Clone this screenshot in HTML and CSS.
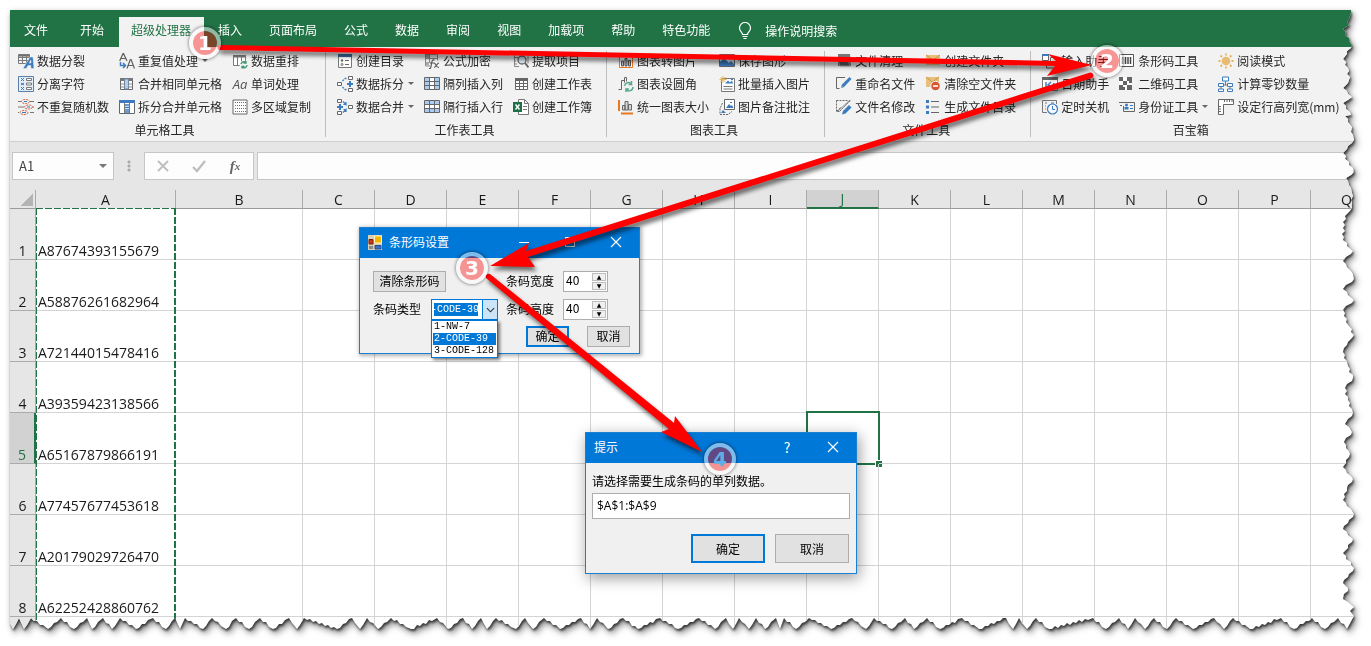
FILE: index.html
```html
<!DOCTYPE html>
<html lang="zh-CN">
<head>
<meta charset="utf-8">
<title>超级处理器 - 条形码工具</title>
<link rel="stylesheet" href="styles.css">
</head>
<body>
<svg class="defs" aria-hidden="true">
  <symbol id="split" viewBox="0 0 16 16"><path d="M.5 1.500h11v2H.5z" fill="#6b6b6b"/><path d="M.5 1.500h11v9H.5zM.5 4.500h11M.5 7.500h11M4.500 1.500v9M8.500 1.500v9" stroke="#7a7a7a" fill="none"/><path d="M5 15.500L12 4h3l1 11.500h-3l-.2-3H10l-1.700 3zM11 10h2l-.2-3z" fill="#3b7bbf" stroke="#f2f2f2" stroke-width=".5"/></symbol>
  <symbol id="chars" viewBox="0 0 16 16"><path d="M.5.5h15v15H.5z" fill="#e4eef8" stroke="#5a7ea6"/><path d="M3 2l3 3m0-3L3 5M3 7l3 2m0-2L3 9m0 2l3 3m0-3l-3 3" stroke="#3b7bbf"/><path d="M8.500 2.500h5v2h-5zM8.500 7h5v2h-5zM8.500 11.500h5v2h-5z" fill="#fff" stroke="#777"/></symbol>
  <symbol id="random" viewBox="0 0 16 16"><g fill="none"><path d="M0 2.500h3M12 2.500h4M0 8h6M15 8h1M0 13.500h1M12 13.500h4" stroke="#777"/><g stroke="#d0553a" stroke-dasharray="2 1"><ellipse cx="7.500" cy="2.500" rx="4" ry="2"/><ellipse cx="10.500" cy="8" rx="4" ry="2"/><ellipse cx="6" cy="13.500" rx="4" ry="2"/></g><path d="M6 2.500h3M9 8h3M4 13.500h4" stroke="#3b7bbf"/></g></symbol>
  <symbol id="repeat" viewBox="0 0 16 16"><path d="M.7 8L4 .7h.6L8 8M2 5.500h4.700M8 15.500l3.300-9h.8l3.400 9M9 12.500h5.500" fill="none" stroke="#606060" stroke-width="1.200"/><path d="M1.500 9v3.500H6M4 10l2.500 2.500L4 15" fill="none" stroke="#3b7bbf" stroke-width="1.500"/></symbol>
  <symbol id="merge" viewBox="0 0 16 16"><path d="M1.500 2.500h12v11h-12z" fill="#fff" stroke="#666"/><path d="M1 2h13v3H1z" fill="#777"/><path d="M5.500 3h4v10h-4z" fill="#b9cee6" stroke="#6f88a5"/><path d="M1.500 8h4M9.500 8h4M1.500 11h4M9.500 11h4" stroke="#888"/></symbol>
  <symbol id="unmerge" viewBox="0 0 16 16"><path d="M.5 1.500h15v13H.5z" fill="#fff" stroke="#666"/><path d="M0 1h16v3H0z" fill="#3b7bbf"/><path d="M5.500 4v10M10.500 4v10" stroke="#777"/><path d="M6 6h4M6 8.500h4M6 11h4M6 13h4" stroke="#3b7bbf" stroke-width="1.500"/></symbol>
  <symbol id="reorder" viewBox="0 0 16 16"><path d="M1.500 2.500h12v10h-12zM5.500 2v10M9.500 2v10" fill="#fff" stroke="#777"/><path d="M1 2h13v2.500H1z" fill="#777"/><circle cx="12" cy="12" r="4.500" fill="#f2f2f2"/><path d="M9 11a3 3 0 0 1 5-1.500V8m0 2h-2.500M15 12a3 3 0 0 1-5 2v1.500m0-2h2.500" fill="none" stroke="#3d9970" stroke-width="1.300"/></symbol>
  <symbol id="area" viewBox="0 0 16 16"><path d="M1 1h14v14H1z" fill="#fff" stroke="#666"/><path d="M3 3.500h11M3 6.500h11M3 9.500h11M3 12.500h11" stroke="#3b7bbf" stroke-dasharray="1 1"/></symbol>
  <symbol id="toc" viewBox="0 0 16 16"><path d="M1.500 1.500h13v13h-13z" fill="#fff" stroke="#777"/><path d="M1 1h14v3H1z" fill="#3b6ea0"/><path d="M8 7.500h4M8 11.500h4" stroke="#666"/><circle cx="5" cy="7.500" r="1.200" fill="#666"/><circle cx="5" cy="11.500" r="1" fill="none" stroke="#666"/></symbol>
  <symbol id="distribute" viewBox="0 0 16 16"><path d="M.5 6.500h4v3h-4zM11.500.5h4v3h-4zM11.500 12.500h4v3h-4z" fill="#fff" stroke="#666"/><path d="M10 8h6M13 5v6" stroke="#3b7bbf" stroke-width="2"/><path d="M5.500 5L8 2.500h2M5.500 11L8 13.500h2" fill="none" stroke="#3b7bbf" stroke-width="1.300" stroke-dasharray="2 1"/></symbol>
  <symbol id="combine" viewBox="0 0 16 16"><path d="M.5.5h4v3h-4zM.5 12.500h4v3h-4zM11.500 6.500h4v3h-4z" fill="#fff" stroke="#666"/><path d="M0 8h6M3 5v6" stroke="#3b7bbf" stroke-width="2"/><path d="M6 2.500l3 3V3m0 2.500H6.500M6 13.500l3-3V13m0-2.500H6.500" fill="none" stroke="#3b7bbf" stroke-width="1.200"/></symbol>
  <symbol id="formula" viewBox="0 0 16 16"><path d="M1.500 1.500h12v6M1.500 1v12H6M5.500 2v8M1.500 5.500h12" fill="none" stroke="#888"/><path d="M2 2h3v3H2zM2 9h3v3H2z" fill="#aaa"/><path d="M5 15.500c2 .5 2-2 2.500-5s1-4 3-3.500M6 10h4M10 10c2 0 2 5 5 4.500M15 10c-2 0-3 4.500-5 4.500" fill="none" stroke="#555" stroke-width="1.100"/></symbol>
  <symbol id="inscol" viewBox="0 0 16 16"><path d="M.5 1.500h15v12H.5z" fill="#fff"/><path d="M1 2h4v11H1zM11 2h4v11h-4z" fill="#a9cdf0"/><path d="M.5 1.500h15v12H.5zM5.500 2v11M10.500 2v11M.5 5.500h15M.5 9.500h15" fill="none" stroke="#666"/></symbol>
  <symbol id="insrow" viewBox="0 0 16 16"><path d="M.5 1.500h15v12H.5z" fill="#fff"/><path d="M1 2h14v3H1zM1 10h14v3H1z" fill="#a9cdf0"/><path d="M.5 1.500h15v12H.5zM5.500 2v11M10.500 2v11M.5 5.500h15M.5 9.500h15" fill="none" stroke="#666"/></symbol>
  <symbol id="extract" viewBox="0 0 16 16"><path d="M4 1.500H1.500v12H6M1 4.500h4M1 8h2M1 11h3M9 1.500h6v9" fill="none" stroke="#888"/><circle cx="9" cy="7" r="4" fill="#dbe8f5" stroke="#666" stroke-width="1.300"/><path d="M12 10l3.500 4.500" stroke="#666" stroke-width="2"/></symbol>
  <symbol id="table" viewBox="0 0 16 16"><path d="M2.500 2.500h12v11h-12zM2.500 7.500h12M2.500 10.500h12M6.500 5v8M10.500 5v8" fill="#fff" stroke="#666"/><path d="M2 2h13v3H2z" fill="#666"/></symbol>
  <symbol id="book" viewBox="0 0 16 16"><path d="M5.500.5h6l4 4v11h-10z" fill="#fff" stroke="#777"/><path d="M11.500.5v4h4M10 7.500h4M10 10.500h4" fill="none" stroke="#777"/><path d="M0 3h9v10H0z" fill="#1e7145"/><path d="M2.500 5.500l4 5m0-5l-4 5" stroke="#fff" stroke-width="1.400"/></symbol>
  <symbol id="chartpic" viewBox="0 0 16 16"><path d="M1.500 2.500h13v12h-13z" fill="#fff" stroke="#e87722"/><path d="M1 1h14v2H1z" fill="#e87722"/><path d="M3.500 8h2v5h-2zM7 5.500h2V13H7zM10.500 7.500h2V13h-2z" fill="#bbb" stroke="#555"/></symbol>
  <symbol id="round" viewBox="0 0 16 16"><path d="M.5 13.500h3v-9h3v6M6.500 6V1.500h2V6" fill="none" stroke="#666"/><circle cx="10.500" cy="10.500" r="5.500" fill="#f2f2f2"/><path d="M6.500 10a4 4 0 0 1 7-2V5m0 3.500h-3M15 11a4 4 0 0 1-7 2.500V16m0-3h3" fill="none" stroke="#5ca88a" stroke-width="1.500"/></symbol>
  <symbol id="size" viewBox="0 0 16 16"><path d="M1 1v11M3 14.500h12" stroke="#e87722" stroke-width="2"/><path d="M4.500 6.500h2.500v4.500H4.500zM7 2.500h3V11H7zM10.500 5.500h3V11h-3z" fill="#d6d6d6" stroke="#666"/></symbol>
  <symbol id="picture" viewBox="0 0 16 16"><path d="M.5 1.500h15v12H.5z" fill="#dbe8f5" stroke="#666"/><path d="M1 13V9l4-4 5 5 2-2 3 3v2z" fill="#3b7bbf"/></symbol>
  <symbol id="batch" viewBox="0 0 16 16"><path d="M2.500 2.500h13v13h-13z" fill="#fff" stroke="#777"/><path d="M6 7.500l3-3 2 2 2-2 1 3zM12 3h2v1h-2z" fill="#3b7bbf"/><path d="M4.500 10.500h9M4.500 13h9" stroke="#777"/><path d="M4 0v7M.5 3.500h7M1.500 1l5 5m0-5l-5 5" stroke="#e8b45c"/></symbol>
  <symbol id="note" viewBox="0 0 16 16"><path d="M5.500.5h10v10h-10z" fill="#fff" stroke="#666"/><path d="M7 9l3-4 2 2 1-1 1.500 3zM11 3h2v1h-2zM2 14l2-3 3 3z" fill="#3b7bbf"/><path d="M3.500 4L1 9.500v6h8l4-3" fill="none" stroke="#666" stroke-dasharray="2 1"/></symbol>
  <symbol id="clean" viewBox="0 0 16 16"><path d="M2 1h12l1 12H2z" fill="#777"/><path d="M1 5h10l3 8H4z" fill="#5e5e5e" stroke="#aaa"/></symbol>
  <symbol id="rename" viewBox="0 0 16 16"><path d="M9 1.500H.5v11h3" fill="none" stroke="#666"/><path d="M5 12l1-3.500L13.500 1l2 2L8 11z" fill="#3b7bbf"/><path d="M5 12l2.500-.5-2-2z" fill="#9ab"/></symbol>
  <symbol id="modify" viewBox="0 0 16 16"><path d="M.5 1.500h12M.5 1.500v11h4M4 12L15 1M1 12l4-4" fill="none" stroke="#666" stroke-dasharray="2 1"/><path d="M1 13L14 1" stroke="#888"/><path d="M6 15.500l1-3.500 6-6 2.500 2.500-6 6z" fill="#3b7bbf"/></symbol>
  <symbol id="folder" viewBox="0 0 16 16"><path d="M1 2h14v10H1z" fill="#e8c07c"/><path d="M1 2l7 5 7-5" fill="none" stroke="#c89648"/></symbol>
  <symbol id="delfolder" viewBox="0 0 16 16"><path d="M1 1h13v10H1z" fill="#e8c07c"/><path d="M1 1l6.500 5L14 1" fill="none" stroke="#c89648"/><circle cx="10.500" cy="10" r="4.700" fill="#d65532" stroke="#f2f2f2"/><path d="M8 10h5" stroke="#fff" stroke-width="1.600"/></symbol>
  <symbol id="list" viewBox="0 0 16 16"><path d="M6 2.500h8M6 8h8M6 13.500h8" stroke="#666"/><path d="M1 1h3v3H1zM1 6.500h3v3H1zM1 12h3v3H1z" fill="#3b7bbf"/></symbol>
  <symbol id="input" viewBox="0 0 16 16"><path d="M.5 1.500h6v6h-6zM8.500 4.500h7v7h-7z" fill="#fff" stroke="#666"/><path d="M0 1h7v2H0z" fill="#3b7bbf"/><path d="M4.500 8v7h8" fill="none" stroke="#666"/></symbol>
  <symbol id="date" viewBox="0 0 16 16"><path d="M.5 1.500h15v13H.5z" fill="#fff" stroke="#777"/><path d="M0 1h16v3H0z" fill="#666"/><path d="M4 6v6M9 6l-3 3 4 3 2-5" fill="none" stroke="#3b7bbf" stroke-width="1.500"/></symbol>
  <symbol id="timer" viewBox="0 0 16 16"><path d="M5 13.500H.5v-12h14V5M3 4h2M3 7h1M3 10h1" fill="none" stroke="#777"/><circle cx="10.500" cy="10" r="5" fill="#f5f9fd" stroke="#3b7bbf" stroke-width="1.200"/><path d="M10.500 7v3.500H13M9 4h3" stroke="#3b7bbf" fill="none"/></symbol>
  <symbol id="barcode" viewBox="0 0 16 16"><path d="M.5 1.500h14v12H.5z" fill="#fff" stroke="#555"/><path d="M3.500 4v7M6.500 4v7M11.500 4v7" stroke="#444" stroke-width="1.500"/><path d="M8.500 4v7M9.500 4v7" stroke="#777"/></symbol>
  <symbol id="qr" viewBox="0 0 16 16"><path d="M0 1h13v13H0z" fill="#fff"/><path d="M0 1h4v4H0zM8 1h5v4H8zM4 5h4v4H4zM0 9h4v5H0zM8 9h5v5H8zM10 5h3v2h-3zM4 11h2v3H4z" fill="#666"/></symbol>
  <symbol id="idcard" viewBox="0 0 16 16"><path d="M0 3.500h3M1 6.500h2M3 3.500h12.500v9h-11V7" fill="none" stroke="#666"/><circle cx="7.500" cy="6" r="1.500" fill="#3b7bbf"/><path d="M5.500 10.500V8h4v2.500z" fill="#3b7bbf"/><path d="M11 6.500h3M11 9.500h3" stroke="#3b7bbf"/></symbol>
  <symbol id="sun" viewBox="0 0 16 16"><circle cx="8" cy="8" r="4.300" fill="#e8bb72"/><path d="M8 .5v2M8 13.500v2M.5 8h2M13.500 8h2M2.500 2.500L4 4M12 12l1.500 1.500M2.500 13.500L4 12M12 4l1.500-1.500" stroke="#e8b45c" stroke-width="1.800"/></symbol>
  <symbol id="tree" viewBox="0 0 16 16"><path d="M4.500 1h6v4h-6zM.5 7.500h5v3h-5zM9.500 7.500h5v3h-5zM.5 13h5v2.500h-5zM9.500 13h5v2.500h-5z" fill="#fff" stroke="#3b7bbf"/><path d="M7.500 5v4M5.500 9h4M3 10.500V13M12 10.500V13" stroke="#777"/></symbol>
  <symbol id="ruler" viewBox="0 0 16 16"><path d="M.5.5h15v5h-10v10h-5z" fill="#fff" stroke="#666"/><path d="M6.500 1v2M9 1v2M11.500 1v2M14 1v2M1 7.500h2M1 10h2M1 12.500h2" stroke="#666"/></symbol>
</svg>

<main class="stage">
  <div class="shadow">
    <div class="app" id="app">
      <nav class="tabs">
        <button class="tab file">文件</button><button class="tab">开始</button><button class="tab active">超级处理器</button><button class="tab">插入</button><button class="tab">页面布局</button><button class="tab">公式</button><button class="tab">数据</button><button class="tab">审阅</button><button class="tab">视图</button><button class="tab">加载项</button><button class="tab">帮助</button><button class="tab">特色功能</button>
        <button class="tab tell"><svg class="bulb" viewBox="0 0 14 18"><path d="M4.500 12.500c0-2.500-3-3-3-6.500a5.500 5.500 0 0 1 11 0c0 3.500-3 4-3 6.500zM4.500 14.500h5M5.500 16.500h3" fill="none" stroke="#fff" stroke-width="1.200"/></svg>操作说明搜索</button>
      </nav>

      <div class="ribbon">
        <section class="group">
          <div class="cols">
            <div class="col"><button class="cmd"><svg><use href="#split"/></svg>数据分裂</button><button class="cmd"><svg><use href="#chars"/></svg>分离字符</button><button class="cmd"><svg><use href="#random"/></svg>不重复随机数</button></div>
            <div class="col"><button class="cmd more"><svg><use href="#repeat"/></svg>重复值处理</button><button class="cmd"><svg><use href="#merge"/></svg>合并相同单元格</button><button class="cmd"><svg><use href="#unmerge"/></svg>拆分合并单元格</button></div>
            <div class="col"><button class="cmd"><svg><use href="#reorder"/></svg>数据重排</button><button class="cmd"><i class="word">Aa</i>单词处理</button><button class="cmd"><svg><use href="#area"/></svg>多区域复制</button></div>
          </div>
          <h2>单元格工具</h2>
        </section>
        <section class="group">
          <div class="cols">
            <div class="col"><button class="cmd"><svg><use href="#toc"/></svg>创建目录</button><button class="cmd more"><svg><use href="#distribute"/></svg>数据拆分</button><button class="cmd more"><svg><use href="#combine"/></svg>数据合并</button></div>
            <div class="col"><button class="cmd"><svg><use href="#formula"/></svg>公式加密</button><button class="cmd"><svg><use href="#inscol"/></svg>隔列插入列</button><button class="cmd"><svg><use href="#insrow"/></svg>隔行插入行</button></div>
            <div class="col"><button class="cmd"><svg><use href="#extract"/></svg>提取项目</button><button class="cmd"><svg><use href="#table"/></svg>创建工作表</button><button class="cmd"><svg><use href="#book"/></svg>创建工作簿</button></div>
          </div>
          <h2>工作表工具</h2>
        </section>
        <section class="group">
          <div class="cols">
            <div class="col"><button class="cmd"><svg><use href="#chartpic"/></svg>图表转图片</button><button class="cmd"><svg><use href="#round"/></svg>图表设圆角</button><button class="cmd"><svg><use href="#size"/></svg>统一图表大小</button></div>
            <div class="col"><button class="cmd"><svg><use href="#picture"/></svg>保存图形</button><button class="cmd"><svg><use href="#batch"/></svg>批量插入图片</button><button class="cmd"><svg><use href="#note"/></svg>图片备注批注</button></div>
          </div>
          <h2>图表工具</h2>
        </section>
        <section class="group">
          <div class="cols">
            <div class="col"><button class="cmd"><svg><use href="#clean"/></svg>文件清理</button><button class="cmd"><svg><use href="#rename"/></svg>重命名文件</button><button class="cmd"><svg><use href="#modify"/></svg>文件名修改</button></div>
            <div class="col"><button class="cmd"><svg><use href="#folder"/></svg>创建文件夹</button><button class="cmd"><svg><use href="#delfolder"/></svg>清除空文件夹</button><button class="cmd"><svg><use href="#list"/></svg>生成文件目录</button></div>
          </div>
          <h2>文件工具</h2>
        </section>
        <section class="group">
          <div class="cols">
            <div class="col"><button class="cmd"><svg><use href="#input"/></svg>输入助手</button><button class="cmd"><svg><use href="#date"/></svg>日期助手</button><button class="cmd"><svg><use href="#timer"/></svg>定时关机</button></div>
            <div class="col"><button class="cmd"><svg><use href="#barcode"/></svg>条形码工具</button><button class="cmd"><svg><use href="#qr"/></svg>二维码工具</button><button class="cmd more"><svg><use href="#idcard"/></svg>身份证工具</button></div>
            <div class="col"><button class="cmd"><svg><use href="#sun"/></svg>阅读模式</button><button class="cmd"><svg><use href="#tree"/></svg>计算零钞数量</button><button class="cmd"><svg><use href="#ruler"/></svg>设定行高列宽(mm)</button></div>
          </div>
          <h2>百宝箱</h2>
        </section>
      </div>

      <div class="formula">
        <div class="namebox"><input value="A1" aria-label="名称框"><span class="caret"></span></div>
        <span class="grip"></span>
        <div class="fx">
          <button aria-label="取消"><svg viewBox="0 0 14 14"><path d="M2 2l10 10M12 2L2 12" stroke="#bdbdbd" stroke-width="1.800"/></svg></button>
          <button aria-label="输入"><svg viewBox="0 0 14 14"><path d="M1 8l4 4 8-10" fill="none" stroke="#bdbdbd" stroke-width="2.200"/></svg></button>
          <button class="fn" aria-label="插入函数">f<small>x</small></button>
        </div>
        <input class="bar" aria-label="编辑栏">
      </div>

      <div class="grid">
        <table>
          <colgroup id="cols"><col class="c-row"><col class="c-a"><col class="c-b"></colgroup>
          <thead><tr id="heads"><th class="corner"></th></tr></thead>
          <tbody id="rows"></tbody>
        </table>
        <div class="ants"></div>
      </div>
    </div>
  </div>

  <section class="dialog barcode" aria-label="条形码设置">
    <header>
      <svg class="appicon" viewBox="0 0 15 15"><path d="M0 0h14v15H0z" fill="#d8d0b4"/><path d="M6.500 1h7v7h-7z" fill="#f5b400" stroke="#fff3c0"/><path d="M1 4.500h4v4.500H1z" fill="#c33a22" stroke="#7c1c10"/><path d="M7 10.500h6v3.500H7z" fill="#3f6fc4" stroke="#234a90"/><path d="M1 11h4v3H1z" fill="#8a8a8a"/></svg>
      <span>条形码设置</span>
      <button aria-label="最小化"><svg viewBox="0 0 12 12"><path d="M1 6.500h10" stroke="#fff"/></svg></button>
      <button aria-label="最大化"><svg viewBox="0 0 12 12"><path d="M1.500 1.500h9v9h-9z" fill="none" stroke="#fff"/></svg></button>
      <button aria-label="关闭"><svg viewBox="0 0 12 12"><path d="M1 1l10 10M11 1L1 11" stroke="#fff" stroke-width="1.200"/></svg></button>
    </header>
    <div class="form">
      <button class="btn clear">清除条形码</button>
      <label for="bw">条码宽度</label>
      <div class="spin"><input id="bw" value="40"><div><button aria-label="增加宽度">▲</button><button aria-label="减少宽度">▼</button></div></div>
      <label for="type">条码类型</label>
      <div class="combo">
        <input id="type" role="combobox" value="-CODE-39">
        <button aria-label="展开"><svg viewBox="0 0 10 6"><path d="M1 1l4 4 4-4" fill="none" stroke="#333" stroke-width="1.200"/></svg></button>
        <ul role="listbox"><li role="option">1-NW-7</li><li role="option" aria-selected="true">2-CODE-39</li><li role="option">3-CODE-128</li></ul>
      </div>
      <label for="bh">条码高度</label>
      <div class="spin"><input id="bh" value="40"><div><button aria-label="增加高度">▲</button><button aria-label="减少高度">▼</button></div></div>
    </div>
    <footer><button class="btn primary">确定</button><button class="btn">取消</button></footer>
  </section>

  <section class="dialog prompt" aria-label="提示">
    <header>
      <span>提示</span>
      <button class="help" aria-label="帮助">?</button>
      <button aria-label="关闭"><svg viewBox="0 0 12 12"><path d="M1 1l10 10M11 1L1 11" stroke="#fff" stroke-width="1.200"/></svg></button>
    </header>
    <div class="ask"><label for="range">请选择需要生成条码的单列数据。</label><input id="range" value="$A$1:$A$9"></div>
    <footer><button class="btn primary">确定</button><button class="btn">取消</button></footer>
  </section>

  <svg class="arrows" aria-hidden="true">
    <g fill="#f00" stroke="none">
      <path d="M220 45L1056 61 1048 54 1092 65 1047 76 1055 66 220 50a2.500 2.500 0 0 1 0-5z"/>
      <path d="M1090 72.500L526 251 529 243 490 266 535 267 528 257 1092 78a3 3 0 0 0-2-5.500z"/>
      <path d="M490 274L674 423 675 416 702 452 661 432 669 429 486 278a3 3 0 0 1 4-4z"/>
    </g>
  </svg>
  <span class="badge b1">1</span><span class="badge b2">2</span><span class="badge b3">3</span><span class="badge b4">4</span>
</main>
<script src="app.js"></script>
</body>
</html>
```

FILE: styles.css
```css
* { box-sizing: border-box; }
body { margin: 0; background: #fff; color: #262626; font: 12px/16px "Noto Sans CJK SC", sans-serif; }
button, input { font: inherit; color: inherit; margin: 0; padding: 0; border: 0; background: none; border-radius: 0; outline: 0; }
button { white-space: nowrap; }
.defs { display: none; }

.stage { position: relative; height: 100vh; padding: 10px 17px 17px 10px; overflow: hidden; }
.shadow { height: 100%; filter: drop-shadow(1px 2px 1px rgba(0,0,0,.6)) drop-shadow(2px 3px 3px rgba(0,0,0,.5)); }
.app { height: 100%; display: flex; flex-direction: column; overflow: hidden; background: #fff; }

.tabs { flex: none; display: flex; height: 37px; padding-top: 7px; background: #217346; color: #fff; }
.tab { padding: 0 13px 4px 14px; }
.file { margin-right: 5px; }
.active { margin-left: 2px; padding-left: 12px; background: #f2f2f2; color: #217346; }
.tell { display: flex; align-items: center; gap: 13px; padding-left: 15px; padding-bottom: 2px; }
.bulb { width: 14px; height: 18px; }

.ribbon { flex: none; display: flex; height: 95px; padding-top: 2px; background: #f2f2f2; border-bottom: 1px solid #cfcfcf; }
.group { position: relative; flex: none; padding: 0 15px 0 11px; }
.group:first-child { padding-left: 8px; }
.group:not(:last-child)::after { content: ""; position: absolute; right: 0; top: 2px; bottom: 4px; width: 1px; background: #bdbdbd; }
.cols { display: flex; gap: 10px; }
.col { display: flex; flex-direction: column; align-items: flex-start; }
.cmd { display: flex; align-items: center; gap: 3px; height: 23px; }
.cmd svg { width: 16px; height: 16px; }
.cmd.more::after { content: ""; margin-left: 1px; border: 3px solid transparent; border-top-color: #666; border-bottom: 0; }
.word { width: 16px; font: italic 13px/16px "Open Sans", sans-serif; color: #555; }
.group h2 { margin: 0; font: inherit; line-height: 24px; text-align: center; }

.formula { flex: none; display: flex; height: 48px; padding: 10px 0 10px 2px; background: #e6e6e6; }
.namebox, .fx, .bar { background: #fdfdfd; border: 1px solid #c6c6c6; }
.namebox { display: flex; align-items: center; width: 102px; padding: 0 6px; color: #444; font-size: 13px; }
.namebox input { flex: 1; min-width: 0; }
.caret { border: 4px solid transparent; border-top-color: #777; border-bottom: 0; }
.grip { width: 30px; background: radial-gradient(circle, #aaa 1px, transparent 2px) center 8px / 4px 4px no-repeat, radial-gradient(circle, #aaa 1px, transparent 2px) center 12px / 4px 4px no-repeat, radial-gradient(circle, #aaa 1px, transparent 2px) center 16px / 4px 4px no-repeat; }
.fx { display: flex; width: 110px; margin-right: 3px; }
.fx button { flex: 1; display: flex; align-items: center; justify-content: center; }
.fx svg { width: 14px; height: 14px; }
.fx .fn { font: italic bold 15px/16px "Liberation Serif", serif; color: #666; }
.fn small { font-size: 11px; }
.bar { flex: 1; }

.grid { position: relative; flex: 1; overflow: hidden; }
table { table-layout: fixed; width: 1373px; border-collapse: separate; border-spacing: 0; color: #1a1a1a; font: 400 14px/16px "Open Sans", sans-serif; }
col { width: 72px; }
.c-row { width: 26px; }
.c-a { width: 140px; }
.c-b { width: 127px; }
th, td { padding: 0; border-right: 1px solid #d4d4d4; border-bottom: 1px solid #d4d4d4; vertical-align: bottom; text-align: left; }
th { font-weight: 400; text-align: center; background: #e6e6e6; border-right-color: #ababab; }
thead th { height: 19px; line-height: 17px; padding-top: 1px; border-bottom-color: #9b9b9b; }
tbody th { border-bottom-color: #ababab; }
.corner { background: linear-gradient(135deg, transparent 50%, #b4b4b4 50%) 11px 4px / 12px 12px no-repeat #e6e6e6; }
tbody tr { height: 51px; }
td { position: relative; padding-left: 2px; }
th.hot { background: #d2d2d2; color: #217346; }
thead .hot { padding-top: 0; border-bottom: 2px solid #217346; }
tbody .hot { border-right: 2px solid #217346; }
.cursor { position: absolute; inset: -2px -2px -2px -1px; border: 2px solid #217346; }
.cursor::after { content: ""; position: absolute; right: -4px; bottom: -4px; width: 6px; height: 6px; background: #217346; border: solid #fff; border-width: 1px 0 0 1px; }
.ants { position: absolute; left: 26px; top: 18px; bottom: 0; width: 140px;
  background: repeating-linear-gradient(90deg, #217346 0 7px, #fff 7px 9px) top / 100% 1px no-repeat,
  repeating-linear-gradient(#217346 0 7px, #fff 7px 9px) left / 1px 100% no-repeat,
  repeating-linear-gradient(#217346 0 7px, #fff 7px 9px) right / 2px 100% no-repeat; }

.dialog { position: absolute; color: #000; background: #f0f0f0; border: 1px solid #1a80d4; }
.dialog header { display: flex; align-items: center; height: 30px; padding: 0 0 2px 8px; background: #0078d7; color: #fff; }
.dialog header span { flex: 1; }
.dialog header button { display: flex; align-items: center; justify-content: center; width: 46px; height: 28px; }
.dialog header button svg { width: 12px; height: 12px; }
.appicon { width: 15px; height: 15px; margin-right: 6px; }
.dialog footer { display: flex; justify-content: flex-end; }
.btn { background: #e1e1e1; border: 1px solid #adadad; }
.btn.primary { border: 2px solid #0078d7; }

.barcode { left: 359px; top: 227px; width: 281px; box-shadow: 1px 1px 4px 1px rgba(0,0,0,.3); }
.form { display: grid; grid-template-columns: 58px 75px 57px 45px; grid-auto-rows: 21px; row-gap: 7px; align-items: center; padding: 13px; }
.form label { white-space: nowrap; line-height: 18px; padding-bottom: 2px; }
.clear { grid-column: 1 / 3; width: 73px; }
.spin { display: flex; height: 21px; padding: 1px; background: #fff; border: 1px solid #adadad; }
.spin input { flex: 1; min-width: 0; height: 14px; padding-left: 1px; line-height: 14px; }
.spin div { display: flex; flex-direction: column; gap: 1px; width: 14px; }
.spin button { flex: 1; min-height: 0; overflow: hidden; background: #f0f0f0; border: 1px solid #bdbdbd; font: 6px/6px "DejaVu Sans", sans-serif; }
.combo { position: relative; display: flex; width: 67px; height: 21px; background: #fff; border: 1px solid #0078d7; font: 10px/12px "Liberation Mono", monospace; }
.combo input { width: 50px; padding: 3px 4px 3px 2px; background: #0078d7 content-box; color: #fff; text-indent: -3px; }
.combo button { flex: 1; display: flex; align-items: center; justify-content: center; background: #cce4f7; border-left: 1px solid #0078d7; }
.combo svg { width: 9px; height: 6px; }
.combo ul { position: absolute; left: -1px; top: 20px; width: 67px; margin: 0; padding: 0 1px; list-style: none; background: #fff; border: 1px solid #0078d7; box-shadow: 2px 2px 3px rgba(0,0,0,.5); white-space: nowrap; }
.combo li { padding-left: 1px; }
.combo li[aria-selected] { background: #0078d7; color: #fff; }
.barcode footer { gap: 18px; margin-top: -7px; padding: 0 9px 6px; }
.barcode .btn { height: 21px; padding-bottom: 2px; line-height: 16px; }
.barcode footer .btn { width: 43px; }

.prompt { left: 585px; top: 432px; width: 272px; box-shadow: 2px 4px 14px rgba(0,0,0,.4); }
.help { font-size: 14px; }
.ask { display: flex; flex-direction: column; gap: 2px; padding: 8px 6px 15px; }
.ask label { line-height: 20px; }
.ask input { height: 26px; padding: 0 4px 2px; background: #fff; border: 1px solid #adadad; font-family: "Open Sans", sans-serif; }
.prompt footer { gap: 10px; padding: 0 7px 10px; }
.prompt .btn { width: 74px; height: 29px; }

.arrows { position: absolute; inset: 0; width: 100%; height: 100%; filter: drop-shadow(2px 4px 2px rgba(0,0,0,.55)); pointer-events: none; }
.badge { position: absolute; width: 32px; height: 32px; border: 4px solid rgba(255,255,255,.5); border-radius: 50%; background: rgba(255,0,0,.39) padding-box; box-shadow: 0 0 3px 1px rgba(0,0,0,.35); color: #fff; font: bold 20px/24px "DejaVu Sans", sans-serif; text-align: center; }
.b1 { left: 189px; top: 27px; }
.b2 { left: 1091px; top: 45px; }
.b3 { left: 456px; top: 252px; }
.b4 { left: 704px; top: 443px; color: #5caee8; }
```

FILE: app.js
```js
const letters = "ABCDEFGHIJKLMNOPQ".split("");
const codes = ["A87674393155679", "A58876261682964", "A72144015478416", "A39359423138566", "A65167879866191", "A77457677453618", "A20179029726470", "A62252428860762", ""];

letters.forEach((l, i) => {
  if (i > 1) document.getElementById("cols").append(document.createElement("col"));
  const th = document.createElement("th");
  th.textContent = l;
  if (l === "J") th.className = "hot";
  document.getElementById("heads").append(th);
});

codes.forEach((code, r) => {
  const tr = document.createElement("tr");
  tr.innerHTML = `<th class="${r === 4 ? "hot" : ""}">${code ? r + 1 : ""}</th>` + letters.map(l =>
    `<td>${l === "A" ? code : l === "J" && r === 4 ? '<div class="cursor"></div>' : ""}</td>`).join("");
  document.getElementById("rows").append(tr);
});

// Torn paper edge: [position along the edge, inset from the edge]
const right = [[0,3],[6,4],[12,7],[15,5],[19,11],[35,2],[49,11],[58,6],[70,5],[78,11],[87,2],[93,11],[105,3],[106,9],[117,2],[122,3],[130,0],[143,11],[162,0],[168,8],[175,5],[183,2],[190,3],[198,2],[206,9],[230,11],[241,1],[251,11],[261,3],[269,0],[279,11],[290,0],[300,11],[316,5],[325,0],[332,6],[342,11],[356,6],[368,1],[378,9],[390,6],[403,1],[414,9],[422,2],[432,10],[444,4],[457,11],[469,1],[478,7],[490,11],[504,0],[519,11],[529,1],[543,11],[558,0],[573,11],[578,6],[589,11],[597,0],[601,4],[606,0]];
const notches = [22,35,70,100,118,137,175,200,212,243,270,297,330,348,403,420,447,500,530,550,567,600,622,665,683,712,755,800,830,845,865,887,897,925,975,1000,1035,1060,1100,1150,1165,1185,1250,1280,1298,1320,1345,1388,1410,1465,1500,1530];
const tips = [15,28,55,85,105,128,155,190,206,232,258,285,312,340,385,412,432,470,512,540,557,590,610,640,675,695,730,775,818,838,857,875,892,910,950,990,1020,1045,1075,1120,1158,1175,1200,1265,1290,1310,1335,1365,1400,1430,1480,1515,1540];
const bottom = [...notches.map(x => [x, 11]), ...tips.map(x => [x, 0])]
  .map(([x, d]) => [Math.round(x / 1.1437) - 10, d]).sort((a, b) => a[0] - b[0]);

function jag(points) {
  const out = [];
  points.forEach(([p, d], i) => {
    out.push([p, d]);
    const next = points[i + 1];
    if (!next) return;
    for (let q = p + 3, k = 0; q < next[0] - 2; q += 3, k++) {
      const t = (q - p) / (next[0] - p);
      out.push([q, Math.max(0, Math.round(d + (next[1] - d) * t + (k % 2 ? 1 : -1)))]);
    }
  });
  return out;
}

const edge = ["0 0"]
  .concat(jag(right).map(([y, d]) => `calc(100% - ${d}px) ${y}px`))
  .concat(jag(bottom).reverse().map(([x, d]) => `${x}px calc(100% - ${d}px)`))
  .concat("0 calc(100% - 6px)");
document.getElementById("app").style.clipPath = `polygon(${edge.join(",")})`;
```
